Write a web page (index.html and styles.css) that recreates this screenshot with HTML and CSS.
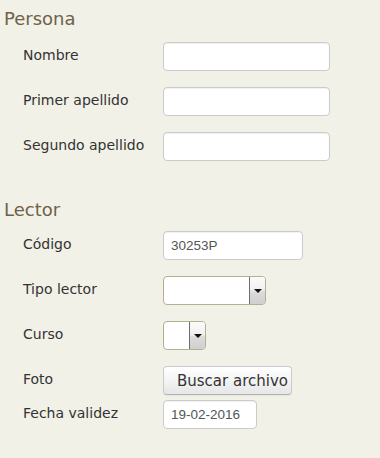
FILE: index.html
```html
<!DOCTYPE html>
<html lang="es">
<head>
<meta charset="utf-8">
<title>Formulario lector</title>
<link rel="stylesheet" href="styles.css">
</head>
<body>
<form class="form">
  <section class="group group-persona">
    <h2 class="group-title">Persona</h2>
    <div class="row"><label class="label">Nombre</label><input class="field field-wide" type="text"></div>
    <div class="row"><label class="label">Primer apellido</label><input class="field field-wide" type="text"></div>
    <div class="row"><label class="label">Segundo apellido</label><input class="field field-wide" type="text"></div>
  </section>
  <section class="group group-lector">
    <h2 class="group-title">Lector</h2>
    <div class="row"><label class="label">Código</label><input class="field field-code" type="text" value="30253P"></div>
    <div class="row"><label class="label">Tipo lector</label>
      <div class="select select-tipo"><span class="select-value"></span><span class="select-btn"><span class="arrow"></span></span></div>
    </div>
    <div class="row"><label class="label">Curso</label>
      <div class="select select-curso"><span class="select-value"></span><span class="select-btn"><span class="arrow"></span></span></div>
    </div>
    <div class="row row-foto"><label class="label">Foto</label><button class="btn" type="button">Buscar archivo</button></div>
    <div class="row row-fecha"><label class="label">Fecha validez</label><input class="field field-date" type="text" value="19-02-2016"></div>
  </section>
</form>
</body>
</html>
```

FILE: styles.css
```css
html, body {
  margin: 0;
  padding: 0;
  background: #f1f1e8;
}
body {
  font-family: "DejaVu Sans", Verdana, sans-serif;
  color: #333;
  width: 380px;
  height: 458px;
  overflow: hidden;
}
.form {
  padding: 0 0 0 4px;
}
.group-title {
  margin: 0;
  font-size: 18px;
  line-height: 22px;
  font-weight: normal;
  color: #6f6149;
}
.group-persona {
  padding-top: 8px;
}
.group-persona .group-title {
  margin-bottom: 12px;
}
.group-lector {
  padding-top: 22px;
}
.group-lector .group-title {
  margin-bottom: 10px;
}
.row {
  display: flex;
  align-items: flex-start;
  margin-bottom: 16px;
  padding-left: 19px;
}
.row-foto {
  margin-top: 1px;
  margin-bottom: 5px;
}
.label {
  width: 140px;
  flex: none;
  font-size: 14px;
  line-height: 17px;
  padding-top: 5px;
  color: #333;
}
.field {
  box-sizing: border-box;
  height: 29px;
  border: 1px solid #cbcbcb;
  border-radius: 4px;
  background: #fff;
  box-shadow: inset 0 1px 1px rgba(0,0,0,0.06);
  padding: 0 7px;
  font-family: "Liberation Sans", Arial, sans-serif;
  font-size: 13.5px;
  color: #555;
  margin: 0;
  outline: none;
}
.field-wide { width: 167px; }
.field-code { width: 140px; }
.field-date { width: 94px; }
.select {
  box-sizing: border-box;
  height: 29px;
  display: flex;
  border: 1px solid #b3b08f;
  border-radius: 4px;
  background: #fff;
  overflow: hidden;
}
.select-tipo { width: 103px; }
.select-curso { width: 43px; }
.select-value {
  flex: 1;
}
.select-btn {
  box-sizing: border-box;
  width: 17px;
  flex: none;
  margin: -1px -1px -1px 0;
  border: 1px solid #6e6e6e;
  background: linear-gradient(to bottom, #fbfbfb 0%, #f1f1f1 45%, #dcdcdc 55%, #cfcfcf 100%);
  display: flex;
  align-items: center;
  justify-content: center;
}
.arrow {
  width: 0;
  height: 0;
  border-left: 4px solid transparent;
  border-right: 4px solid transparent;
  border-top: 4px solid #111;
  margin-top: 1px;
}
.btn {
  box-sizing: border-box;
  width: 129px;
  height: 29px;
  margin: 0;
  padding: 0 0 0 13px;
  text-align: left;
  font-family: "DejaVu Sans", Verdana, sans-serif;
  font-size: 15px;
  color: #333;
  background: linear-gradient(to bottom, #ffffff 0%, #f4f4f4 50%, #e6e6e6 100%);
  border: 1px solid #cccccc;
  border-bottom-color: #b3b3b3;
  border-radius: 4px;
  box-shadow: 0 1px 1px rgba(0,0,0,0.05);
}
```
